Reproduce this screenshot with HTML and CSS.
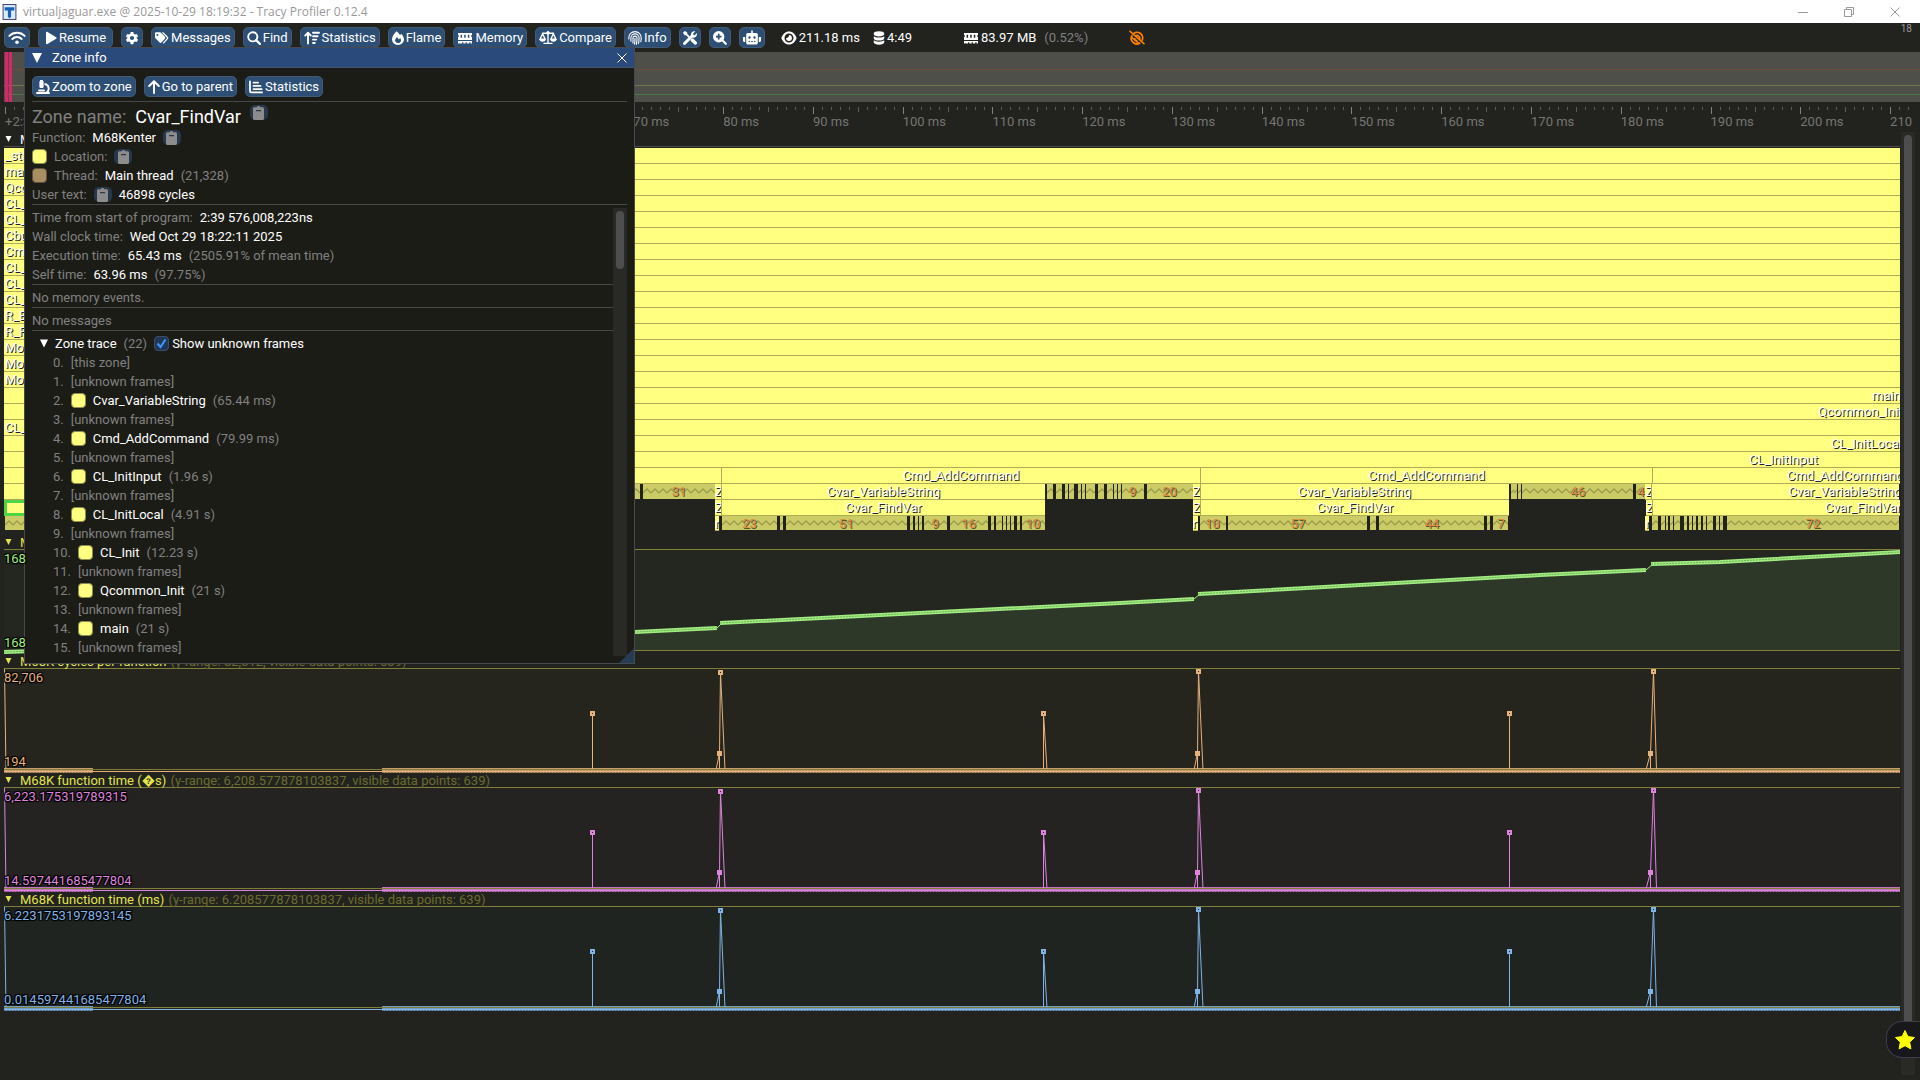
FILE: index.html
```html
<!DOCTYPE html>
<html lang="en">
<head>
<meta charset="utf-8">
<title>virtualjaguar.exe @ 2025-10-29 18:19:32 - Tracy Profiler 0.12.4</title>
<link rel="stylesheet" href="styles.css">
</head>
<body>
<svg class="defs" aria-hidden="true">
  <symbol id="i-wifi" viewBox="0 0 20 16"><path d="M1.5 6.2a12 12 0 0 1 17 0M4.8 9.6a7.6 7.6 0 0 1 10.4 0" fill="none" stroke="currentColor" stroke-width="2.2" stroke-linecap="round"/><circle cx="10" cy="13.3" r="2"/></symbol>
  <symbol id="i-play" viewBox="0 0 12 14"><path d="M1 1.8C1 1 1.8.6 2.500 1l8.600 5.200c.6.4.6 1.200 0 1.600L2.500 13C1.800 13.400 1 13 1 12.200z"/></symbol>
  <symbol id="i-gear" viewBox="0 0 16 16"><path fill-rule="evenodd" d="M6.500 1h3l.5 2.200 1.300.8 2.200-.7 1.500 2.600L13.400 7.300v1.400l1.600 1.400-1.500 2.600-2.200-.7-1.300.8L9.500 15h-3L6 12.800l-1.300-.8-2.200.7L1 10.100l1.600-1.400V7.300L1 5.900l1.500-2.600 2.200.7L6 3.200zM8 5.600a2.400 2.400 0 1 0 0 4.800 2.400 2.400 0 0 0 0-4.800z"/></symbol>
  <symbol id="i-tags" viewBox="0 0 16 14"><path fill-rule="evenodd" d="M0 1.500C0 .9.500.5 1 .5h4.600c.4 0 .8.200 1.100.5l4.600 4.700c.6.6.6 1.500 0 2.100l-3.900 4.400c-.6.6-1.500.6-2.100 0L.5 7.300C.2 7 0 6.600 0 6.200zM2.800 2.400a1.100 1.100 0 1 0 0 2.200 1.100 1.100 0 0 0 0-2.200z"/><path d="M9 .9l4.900 4.900c.7.700.7 1.500 0 2.200L9.900 12.600" fill="none" stroke="currentColor" stroke-width="1.500" stroke-linecap="round"/></symbol>
  <symbol id="i-search" viewBox="0 0 14 14"><circle cx="5.800" cy="5.800" r="4.600" fill="none" stroke="currentColor" stroke-width="1.900"/><path d="M9.200 9.200l3.700 3.700" stroke="currentColor" stroke-width="2.200" stroke-linecap="round"/></symbol>
  <symbol id="i-sort" viewBox="0 0 16 14"><path d="M4 12.500V2M1.200 4.600L4 1.700l2.800 2.900M9 1.800h6M9 5.200h4.600M9 8.600h3.200M9 12h1.800" fill="none" stroke="currentColor" stroke-width="1.900" stroke-linecap="round" stroke-linejoin="round"/></symbol>
  <symbol id="i-flame" viewBox="0 0 12 14"><path fill-rule="evenodd" d="M4.600.3c1.600 1.300 2.700 2.700 3.500 4 .3-.5.7-1 1.200-1.500C10.800 4.300 12 6.700 12 8.300 12 11.500 9.300 14 6 14s-6-2.500-6-5.700C0 5.600 2.200 2.500 4.600.3zM6.100 12c1.700 0 2.900-1.100 2.900-2.600 0-.9-.5-1.800-.9-2.300L6.900 8.500 5 6.100C4 7.300 3.100 8.400 3.100 9.500c0 1.500 1.300 2.500 3 2.500z"/></symbol>
  <symbol id="i-ram" viewBox="0 0 16 12"><path fill-rule="evenodd" d="M1 1h14v1.800a1.300 1.300 0 0 0 0 2.400V8H1V5.200a1.300 1.300 0 0 0 0-2.400zM3.600 2.700v3h1.500v-3zm3.600 0v3h1.500v-3zm3.600 0v3h1.500v-3z"/><path d="M1 9h14v2.500h-1.500v-1.200h-1.200v1.200H9.900v-1.200H8.700v1.200H6.300v-1.200H5.100v1.200H2.700v-1.200H2.500v1.200H1z"/></symbol>
  <symbol id="i-scale" viewBox="0 0 18 14"><path d="M9 1v11.800M5 12.900h8M3.500 2.800h11M3.600 3.200L1 8.800h5.200zM14.400 3.200l-2.600 5.600H17z" fill="none" stroke="currentColor" stroke-width="1.400" stroke-linejoin="round" stroke-linecap="round"/><path d="M.3 8.600h6.600c0 1.600-1.500 2.600-3.300 2.600S.3 10.200.3 8.600zM11.100 8.600h6.600c0 1.600-1.500 2.600-3.300 2.600s-3.300-1-3.300-2.600z"/><circle cx="9" cy="2.400" r="1.700"/></symbol>
  <symbol id="i-print" viewBox="0 0 14 14"><path d="M.8 8V6.800a6.200 6.200 0 0 1 12.400 0c0 1.700 0 2.700-.4 4M2.900 10.200V7a4.100 4.100 0 0 1 8.200 0c0 2.300-.1 3.800-.7 5.600M5 12V7.100a2 2 0 0 1 4 0c0 2.500-.1 4.300-.7 6.300M7 7.200c0 2.500 0 4.200-.5 6" fill="none" stroke="currentColor" stroke-width="1.100" stroke-linecap="round"/></symbol>
  <symbol id="i-tools" viewBox="0 0 14 14"><path d="M1.500 12.500L9 5" stroke="currentColor" stroke-width="3" stroke-linecap="round"/><path d="M8 2.800C8.600.8 10.500 0 12.300.5L10.200 2.600l.3 1.400 1.300.3L13.700 2c.8 2-.5 4.500-2.800 4.700-1 .1-2-.3-2.700-1z"/><path d="M1.200 1.200l5 5" stroke="currentColor" stroke-width="1.800"/><path d="M0 1.800L1.800 0l2.400 1.600v1.300L3 4.200H1.500zM7.600 8.600l1.100-1.200 1.500.1 3.500 3.600c.8.800 0 2.600-1.500 2.600-.4 0-.7-.2-.9-.4L7.700 9.900z"/></symbol>
  <symbol id="i-zoom" viewBox="0 0 14 14"><path fill-rule="evenodd" d="M5.700 0a5.700 5.700 0 1 1 0 11.400A5.700 5.700 0 0 1 5.700 0zm-.9 2.800v2H2.900v1.700h1.900v2h1.800v-2h1.900V4.800H6.600v-2z"/><path d="M9.300 9.300l3.500 3.500" stroke="currentColor" stroke-width="2.200" stroke-linecap="round"/></symbol>
  <symbol id="i-robot" viewBox="0 0 18 14"><path fill-rule="evenodd" d="M8.200 0h1.600v2.600H13c1 0 1.800.8 1.800 1.800v7.800c0 1-.8 1.800-1.800 1.800H5c-1 0-1.800-.8-1.800-1.800V4.400c0-1 .8-1.800 1.800-1.800h3.200zM6.500 5.800a1.200 1.200 0 1 0 0 2.400 1.200 1.200 0 0 0 0-2.400zm5 0a1.200 1.200 0 1 0 0 2.400 1.200 1.200 0 0 0 0-2.400zM5.500 10.500v1h1.600v-1zm2.700 0v1h1.600v-1zm2.700 0v1h1.600v-1z"/><path d="M0 6.500h2.200v5H1.200C.5 11.500 0 11 0 10.300zM15.800 6.500H18v3.800c0 .7-.5 1.200-1.200 1.200h-1z"/></symbol>
  <symbol id="i-eye" viewBox="0 0 16 14"><path fill-rule="evenodd" d="M8 .5c3.500 0 6.400 2.700 7.700 6.500-1.300 3.800-4.200 6.500-7.700 6.500S1.600 10.800.3 7C1.600 3.200 4.500.5 8 .5zm0 2a4.500 4.500 0 1 0 0 9 4.500 4.500 0 0 0 0-9z"/><path d="M8 4.100a2.900 2.900 0 1 1-2.900 2.900c1.700.2 2.900-1 2.900-2.900z"/></symbol>
  <symbol id="i-db" viewBox="0 0 13 16"><path d="M.5 2.800C.5 1.400 3.200.4 6.500.4s6 1 6 2.400v1c0 1.400-2.700 2.400-6 2.400s-6-1-6-2.400zM.5 6c1.200 1 3.400 1.500 6 1.500s4.800-.5 6-1.500v2.500c0 1.400-2.700 2.400-6 2.400s-6-1-6-2.400zM.5 10.600c1.200 1 3.400 1.600 6 1.600s4.800-.6 6-1.600v2.600c0 1.400-2.700 2.400-6 2.400s-6-1-6-2.400z"/></symbol>
  <symbol id="i-sat" viewBox="0 0 18 16"><path d="M4 5.500a6 6 0 0 0 8.500 8.200M4.500 4.500a6 6 0 0 1 9.800 6.800M6.800 6.300a3.200 3.200 0 0 1 4.700 4M6.300 8.500a3.200 3.200 0 0 0 3.200 3" fill="none" stroke="currentColor" stroke-width="1.900"/><path d="M1 1l16 14M3.500 8l7 6" stroke="currentColor" stroke-width="1.600"/></symbol>
  <symbol id="i-micro" viewBox="0 0 14 14"><path d="M1 13h12M3 10.500h5" stroke="currentColor" stroke-width="2" stroke-linecap="round"/><path d="M4 0h3v1l.6.6v5.600L6.800 8H4.200l-.8-.8V1.600L4 1z"/><path d="M8.500 4a4.600 4.600 0 0 1 1.800 8.600" fill="none" stroke="currentColor" stroke-width="1.900"/></symbol>
  <symbol id="i-up" viewBox="0 0 12 14"><path d="M6 13V1.500M1.200 6L6 1.300 10.800 6" fill="none" stroke="currentColor" stroke-width="2" stroke-linecap="round" stroke-linejoin="round"/></symbol>
  <symbol id="i-chart" viewBox="0 0 14 13"><path d="M1 1v9.500c0 .9.500 1.400 1.400 1.400H13M4.500 2.200H9M4.500 5.400h7M4.500 8.600h8.200" fill="none" stroke="currentColor" stroke-width="1.800" stroke-linecap="round"/></symbol>
  <symbol id="i-clip" viewBox="0 0 11 14"><path fill-rule="evenodd" d="M3.800 1.200a1.800 1.800 0 0 1 3.400 0H9.500c.8 0 1.500.7 1.500 1.500V12.500c0 .8-.7 1.500-1.500 1.500h-8C.7 14 0 13.300 0 12.500V2.700c0-.8.7-1.500 1.500-1.500zM3 4v1.200h5V4z"/></symbol>
  <symbol id="i-star" viewBox="0 0 20 20"><path d="M10 .5l2.900 6.100 6.600.9-4.800 4.700 1.200 6.700L10 15.700l-5.900 3.200 1.200-6.700L.5 7.500l6.600-.9z" stroke="currentColor" stroke-linejoin="round"/></symbol>
  <symbol id="i-down" viewBox="0 0 10 10"><path d="M0 0h10L5 10z"/></symbol>
  <symbol id="i-close" viewBox="0 0 10 10"><path d="M.5.5l9 9M9.500.5l-9 9" fill="none" stroke="currentColor"/></symbol>
</svg>

<header class="titlebar">
  <svg class="app-icon" viewBox="0 0 13 15"><rect x=".5" y=".5" width="12" height="14" fill="#d9ecfb" stroke="#4a4a78"/><path d="M2 3h9v3H8v6l-1.500 1.500L5 12V6H2z" fill="#1560b8"/></svg>
  <span class="app-title">virtualjaguar.exe @ 2025-10-29 18:19:32 - Tracy Profiler 0.12.4</span>
  <button class="win-btn" aria-label="Minimize"><svg viewBox="0 0 10 10"><path d="M0 5.500h10" stroke="currentColor"/></svg></button>
  <button class="win-btn" aria-label="Restore"><svg viewBox="0 0 10 10"><path d="M.5 2.500h7v7h-7zM2.500 2.500v-2h7v7h-2" fill="none" stroke="currentColor"/></svg></button>
  <button class="win-btn" aria-label="Close"><svg viewBox="0 0 10 10"><use href="#i-close"/></svg></button>
</header>

<nav class="toolbar">
  <button class="btn btn-icon" aria-label="Connection"><svg class="w18"><use href="#i-wifi"/></svg></button>
  <button class="btn btn-wide"><svg class="w12"><use href="#i-play"/></svg>Resume</button>
  <button class="btn btn-icon" aria-label="Options"><svg class="w14"><use href="#i-gear"/></svg></button>
  <button class="btn"><svg class="w14"><use href="#i-tags"/></svg>Messages</button>
  <button class="btn"><svg class="w14"><use href="#i-search"/></svg>Find</button>
  <button class="btn"><svg class="w16"><use href="#i-sort"/></svg>Statistics</button>
  <button class="btn"><svg class="w12"><use href="#i-flame"/></svg>Flame</button>
  <button class="btn"><svg class="w16"><use href="#i-ram"/></svg>Memory</button>
  <button class="btn"><svg class="w18"><use href="#i-scale"/></svg>Compare</button>
  <button class="btn"><svg class="w14"><use href="#i-print"/></svg>Info</button>
  <button class="btn btn-icon" aria-label="Tools"><svg class="w14"><use href="#i-tools"/></svg></button>
  <button class="btn btn-icon" aria-label="Zoom"><svg class="w14"><use href="#i-zoom"/></svg></button>
  <button class="btn btn-icon" aria-label="Assistant"><svg class="w18"><use href="#i-robot"/></svg></button>
  <span class="stat stat-view"><svg class="w16"><use href="#i-eye"/></svg>211.18 ms</span>
  <span class="stat stat-span"><svg class="w12"><use href="#i-db"/></svg>4:49</span>
  <span class="stat stat-mem"><svg class="w16"><use href="#i-ram"/></svg>83.97 MB <span class="dim">(0.52%)</span></span>
  <svg class="offline w18"><use href="#i-sat"/></svg>
  <span class="fps">18</span>
</nav>

<div class="frames"><i></i><i></i></div>
<div class="ruler" id="ruler"></div>

<main class="pane">
  <div class="tracks">
    <div class="thread-head"><svg><use href="#i-down"/></svg>Main thread</div>
    <div id="zones"></div>
    <section class="plot green" data-kind="ramp">
      <h2><svg><use href="#i-down"/></svg>M68K cycles</h2>
      <div class="graph"><span>168</span><span>168</span></div>
    </section>
    <section class="plot orange" data-kind="spikes">
      <h2><svg><use href="#i-down"/></svg>M68K cycles per function <small>(y-range: 82,512, visible data points: 639)</small></h2>
      <div class="graph"><span>82,706</span><span>194</span></div>
    </section>
    <section class="plot pink" data-kind="spikes">
      <h2><svg><use href="#i-down"/></svg>M68K function time (&#xFFFD;s) <small>(y-range: 6,208.577878103837, visible data points: 639)</small></h2>
      <div class="graph"><span>6,223.175319789315</span><span>14.597441685477804</span></div>
    </section>
    <section class="plot blue" data-kind="spikes">
      <h2><svg><use href="#i-down"/></svg>M68K function time (ms) <small>(y-range: 6.208577878103837, visible data points: 639)</small></h2>
      <div class="graph"><span>6.2231753197893145</span><span>0.014597441685477804</span></div>
    </section>
  </div>
  <div class="scroll main-scroll"><i></i></div>
</main>

<button class="badge" aria-label="Achievements"><svg><use href="#i-star"/></svg></button>

<section class="window">
  <header><svg><use href="#i-down"/></svg><h1>Zone info</h1><button class="close" aria-label="Close"><svg><use href="#i-close"/></svg></button></header>
  <div class="window-body">
    <div class="actions">
      <button class="btn"><svg class="w14"><use href="#i-micro"/></svg>Zoom to zone</button>
      <button class="btn"><svg class="w12"><use href="#i-up"/></svg>Go to parent</button>
      <button class="btn"><svg class="w14"><use href="#i-chart"/></svg>Statistics</button>
    </div>
    <hr>
    <p class="line zone-name"><span class="dim">Zone name:</span> <b>Cvar_FindVar</b> <button class="copy" aria-label="Copy name"><svg><use href="#i-clip"/></svg></button></p>
    <p class="line"><span class="dim">Function:</span> <b>M68Kenter</b> <button class="copy" aria-label="Copy function"><svg><use href="#i-clip"/></svg></button></p>
    <p class="line"><i class="swatch"></i> <span class="dim">Location:</span> <button class="copy" aria-label="Copy location"><svg><use href="#i-clip"/></svg></button></p>
    <p class="line"><i class="swatch tan"></i> <span class="dim">Thread:</span> <b>Main thread</b> <span class="dim">(21,328)</span></p>
    <p class="line"><span class="dim">User text:</span> <button class="copy" aria-label="Copy text"><svg><use href="#i-clip"/></svg></button> <b>46898 cycles</b></p>
    <hr>
    <div class="details">
      <div class="details-content">
        <p class="line"><span class="dim">Time from start of program:</span> <b>2:39 576,008,223ns</b></p>
        <p class="line"><span class="dim">Wall clock time:</span> <b>Wed Oct 29 18:22:11 2025</b></p>
        <p class="line"><span class="dim">Execution time:</span> <b>65.43 ms</b> <span class="dim">(2505.91% of mean time)</span></p>
        <p class="line"><span class="dim">Self time:</span> <b>63.96 ms</b> <span class="dim">(97.75%)</span></p>
        <hr>
        <p class="line dim">No memory events.</p>
        <hr>
        <p class="line dim">No messages</p>
        <hr>
        <div class="line trace-head"><svg><use href="#i-down"/></svg><b>Zone trace</b> <span class="dim">(22)</span> <label><input type="checkbox" checked>Show unknown frames</label></div>
        <ul class="trace" id="trace"></ul>
      </div>
      <div class="scroll"><i></i></div>
    </div>
  </div>
  <svg class="grip" viewBox="0 0 15 15"><path d="M15 0v15H0z"/></svg>
</section>
<script src="app.js"></script>
</body>
</html>
```
FILE: styles.css
```css
* { box-sizing: border-box; }
body {
  margin: 0;
  min-height: 100vh;
  display: flex;
  flex-direction: column;
  position: relative;
  background: #22231e;
  color: #fff;
  font: 13px/15px Roboto, "Liberation Sans", sans-serif;
  overflow: hidden;
}
h1, h2, p, ul { margin: 0; padding: 0; font-size: 13px; font-weight: 400; }
b { font-weight: 400; color: #fff; }
i { display: block; }
button { font: inherit; color: inherit; border: 0; background: none; padding: 0; margin: 0; }
svg { fill: currentColor; display: block; flex: none; }
.defs { display: none; }
.dim { color: #808080; }
.w12 { width: 12px; height: 14px; }
.w14 { width: 14px; height: 14px; }
.w16 { width: 16px; height: 14px; }
.w18 { width: 18px; height: 15px; }

/* title bar */
.titlebar {
  display: flex;
  align-items: center;
  height: 23px;
  background: #fff;
  color: #999;
  padding: 0 2px;
  font: 12px/16px "Open Sans", "Noto Sans", sans-serif;
}
.app-icon { width: 15px; height: 16px; }
.app-title { flex: 1; margin-left: 6px; }
.win-btn { width: 46px; height: 20px; display: flex; justify-content: center; align-items: center; }
.win-btn svg { width: 10px; height: 10px; }

/* toolbar */
.toolbar { display: flex; align-items: center; gap: 8px; height: 29px; padding: 0 4px; }
.btn {
  display: flex;
  align-items: center;
  gap: 2px;
  height: 21px;
  padding: 0 3px;
  background: #2d4f76;
  border: 1px solid #435a72;
  border-radius: 5px;
  white-space: nowrap;
}
.btn-wide { padding: 0 6px; }
.stat { display: flex; align-items: center; gap: 2px; white-space: nowrap; }
.stat .dim { margin-left: 6px; }
.stat-view { margin-left: 8px; }
.stat-span { margin-left: 5px; }
.stat-mem { margin-left: 43px; }
.offline { margin-left: 32px; color: #ff8000; }
.fps { margin-left: auto; align-self: flex-start; padding-right: 4px; font-size: 10px; line-height: 11px; color: #999; }

/* frame overview */
.frames {
  display: flex;
  gap: 1px;
  height: 50px;
  margin-left: 4px;
  padding-left: 1px;
  background:
    linear-gradient(#70483f, #70483f) 0 17px / 100% 1px no-repeat,
    linear-gradient(#76764c, #76764c) 0 33px / 100% 1px no-repeat,
    linear-gradient(#487848, #487848) 0 42px / 100% 1px no-repeat,
    #4d4f48;
}
.frames i { width: 3px; height: 100%; background: #dc2468; }

/* time ruler */
.ruler { display: flex; height: 30px; margin: 0 5px 0 5px; padding-top: 5px; overflow: hidden; color: #757571; }
.ruler-cell { flex: none; width: 4.7%; white-space: nowrap; }
.ticks { display: flex; height: 7px; }
.ticks i { flex: 1; height: 3px; border-left: 1px solid #5a5a56; }
.ticks i:nth-child(6) { height: 5px; }
.ticks i:first-child { height: 7px; border-color: #80807c; }

/* timeline */
.pane { flex: 1; display: flex; gap: 1px; padding: 0 5px 5px 4px; }
.tracks { flex: 1; min-width: 0; overflow: hidden; }
.thread-head { display: flex; align-items: center; height: 15px; border-bottom: 1px solid #4a4a4c; margin-bottom: 1px; }
.thread-head svg, .plot h2 svg { width: 9px; height: 6px; margin-right: 7px; }
.scroll { flex: none; width: 14px; padding: 3px; background: #292925; }
.scroll i { width: 8px; border-radius: 4px; background: #4e4e4f; }
.main-scroll i { height: 96%; }

.zone-row { display: flex; height: 16px; }
.zone-row:last-child { height: 15px; }
.zone-row > span { min-width: 0; overflow: hidden; white-space: nowrap; text-align: center; line-height: 16px; border-bottom: 1px solid transparent; }
.zone-row > .y { background: #ffff80; border-bottom-color: #adad58; color: #fff; text-shadow: 1px 1px 0 #222; }
.zone-row > .b { border-left: 1px solid #adad58; }
.zone-row > .l { text-align: left; padding-left: 1px; }
.zone-row > .z { text-align: left; }
.zone-row > .g {
  background: #cccc66 url("data:image/svg+xml,%3Csvg xmlns='http://www.w3.org/2000/svg' width='8' height='15'%3E%3Cpath d='M0 9l4-4 4 4' fill='none' stroke='%239c9c4e' stroke-width='1.3'/%3E%3C/svg%3E") repeat-x padding-box;
  color: #dd8844;
  text-shadow: 1px 1px 0 #555530;
}
.zone-row > .s { background: #ffff80 padding-box; border: 3px solid #4fd445; }

/* plots */
.plot h2 { display: flex; align-items: flex-end; height: 19px; line-height: 13px; border-bottom: 1px solid #7f7f38; color: #e3e34c; white-space: pre; }
.plot h2 svg { margin-bottom: 4px; }
.plot small { font-size: 13px; color: #6b6b2e; margin-left: 1px; }
.graph { display: grid; grid-template-rows: 100px; height: 100px; }
.graph > * { grid-area: 1 / 1; }
.graph svg { width: 100%; height: 106px; overflow: visible; }
.graph span { z-index: 1; justify-self: start; align-self: start; margin: 1px 0; text-shadow: 0 0 1px #000, 1px 1px 1px #000, -1px -1px 1px #000, 1px -1px 1px #000, -1px 1px 1px #000; }
.graph span + span { align-self: end; margin: 0; }
.green .graph { background: #24271f; color: #a0ee80; }
.orange .graph { background: #26251d; color: #e6b27d; }
.pink .graph { background: #252321; color: #dd84dd; }
.blue .graph { background: #202421; color: #80b3e6; }
.curve { fill: none; stroke: currentColor; }
.band { fill: none; stroke: currentColor; stroke-width: 5; opacity: .85; }
.thick { fill: none; stroke: currentColor; stroke-width: 4; }
.points { fill: none; stroke: #000; stroke-opacity: .28; stroke-width: 1; stroke-dasharray: 2 1; }
.area { fill: #2e3828; }
.base { stroke: #7f7f38; }
.node { fill: #22231e; stroke: currentColor; stroke-width: 2; }
.full { fill: currentColor; }

/* achievements badge */
.badge {
  position: absolute;
  right: 0;
  bottom: 22px;
  width: 34px;
  height: 37px;
  padding-left: 8px;
  background: #18181a;
  border: 1px solid #3d3d48;
  border-right: 0;
  border-radius: 16px 0 0 16px;
  color: #ff0;
}
.badge svg { width: 20px; height: 20px; }

/* zone info window */
.window {
  position: absolute;
  left: 24px;
  top: 47px;
  width: 611px;
  height: 617px;
  display: flex;
  flex-direction: column;
  background: #1c1c16;
  border: 1px solid #464a50;
}
.window header { display: flex; align-items: center; height: 20px; padding: 0 7px; background: #294a7a; border-bottom: 1px solid #46526a; }
.window header svg { width: 10px; height: 10px; }
.window h1 { flex: 1; margin-left: 10px; }
.window-body { flex: 1; min-height: 0; display: flex; flex-direction: column; padding: 8px 7px 7px; }
.actions { display: flex; gap: 8px; margin-bottom: 4px; }
hr { width: 100%; flex: none; height: 1px; margin: 0 0 3px; border: 0; background: #47474a; }
.line { display: flex; align-items: center; gap: 7px; height: 19px; white-space: nowrap; }
.zone-name { gap: 9px; height: 23px; font-size: 18px; line-height: 22px; }
.zone-name .copy { align-self: flex-start; }
.copy { display: flex; justify-content: center; align-items: center; width: 18px; height: 15px; border-radius: 5px; background: #27384c; color: #8c8c8c; }
.copy svg { width: 11px; height: 14px; }
.swatch { flex: none; width: 15px; height: 15px; border-radius: 4px; background: #ffff80; border: 1px solid #8c8c50; }
.tan { background: #a98e62; border-color: #5e5340; }
.details { flex: 1; min-height: 0; display: flex; }
.details-content { flex: 1; min-width: 0; overflow: hidden; }
.details .scroll i { height: 58px; }
.trace-head { padding-left: 8px; }
.trace-head > svg { width: 8px; height: 9px; }
.trace-head label { display: flex; align-items: center; gap: 3px; }
input[type="checkbox"] {
  appearance: none;
  width: 15px;
  height: 15px;
  margin: 0;
  border: 1px solid #3d4f66;
  border-radius: 4px;
  background: #1f3858 url("data:image/svg+xml,%3Csvg xmlns='http://www.w3.org/2000/svg' viewBox='0 0 13 13'%3E%3Cpath d='M2.500 6.500l3 3.500 5-7.500' fill='none' stroke='%234296fa' stroke-width='2'/%3E%3C/svg%3E");
}
.trace { list-style: none; padding-left: 21px; }
.grip { position: absolute; right: 0; bottom: 0; width: 15px; height: 15px; color: #263b54; }
```
FILE: app.js
```js
const START = 4, END = 1900;

// Ruler: one cell per 10 ms, ten ticks each.
const ruler = document.getElementById('ruler');
for (let i = 0; i < 22; i++) {
  const cell = document.createElement('div');
  cell.className = 'ruler-cell';
  cell.innerHTML = '<div class="ticks">' + '<i></i>'.repeat(10) + '</div>' + (i ? i * 10 + ' ms' : '+2:39');
  ruler.append(cell);
}

// Zones: [kind, end, label]; kinds: y zone, g folded zones, s selected, n empty, b left edge, l and z label at the left.
const left = ['_start', 'main', 'Qcommon_Init', 'CL_Init', 'CL_Init', 'Cbuf', 'Cmd', 'CL_', 'CL_', 'CL_', 'R_B', 'R_F', 'Mod', 'Mod', 'Mod', '', '', 'CL_'];
const right = { 15: [1871, 'main'], 16: [1817, 'Qcommon_Init'], 18: [1830, 'CL_InitLocal'], 19: [1748, 'CL_InitInput'] };
const rows = [];
for (let r = 0; r < 20; r++) {
  const row = [['y l', 600, left[r] || '']];
  if (right[r]) row.push(['y', right[r][0], ''], ['y l', END, right[r][1]]);
  else row.push(['y', END, '']);
  rows.push(row);
}

// Alternates folded zones and gaps through a list of edges.
const folds = (edges, labels = {}) => edges.map((e, i) => [i % 2 ? 'n' : 'g', e, labels[e] || '']);

rows.push([['y', 721, ''], ['y b', 1200, 'Cmd_AddCommand'], ['y b', 1652, 'Cmd_AddCommand'], ['y b', 1787, ''], ['y z', END, 'Cmd_AddCommand']]);
rows.push([['y', 600, ''],
  ...folds([640, 643, 715], { 715: '31' }), ['y z', 721, 'Z'], ['y b', 1045, 'Cvar_VariableString'], ['n', 1047, ''],
  ...folds([1053, 1056, 1062, 1065, 1068, 1069, 1074, 1078, 1081, 1082, 1085, 1086, 1095, 1098, 1104, 1107, 1113, 1114, 1117, 1118, 1121, 1122, 1144, 1147, 1193], { 1144: '9', 1193: '20' }),
  ['y z', 1200, 'Z'], ['y b', 1509, 'Cvar_VariableString'], ['n', 1511, ''],
  ...folds([1514, 1515, 1518, 1519, 1522, 1523, 1634, 1637, 1646], { 1634: '46', 1646: '4' }),
  ['y z', 1652, 'Z'], ['y b', 1789, ''], ['y z', END, 'Cvar_VariableString']]);
rows.push([['s', 400, ''], ['n', 715, ''], ['y z', 721, 'Z'], ['y b', 1045, 'Cvar_FindVar'], ['n', 1193, ''],
  ['y z', 1200, 'Z'], ['y b', 1509, 'Cvar_FindVar'], ['n', 1646, ''], ['y z', 1652, 'Z'], ['y b', 1825, ''], ['y z', END, 'Cvar_FindVar']]);
rows.push([['n', 5, ''], ['g', 400, ''], ['n', 715, ''], ['y z', 719, 'r'], ['n', 722, ''],
  ...folds([777, 780, 783, 786, 907, 910, 913, 915, 918, 919, 922, 924, 947, 950, 988, 991, 994, 996, 1002, 1003, 1006, 1007, 1010, 1011, 1014, 1017, 1020, 1022, 1045], { 777: '23', 907: '51', 947: '9', 988: '16', 1045: '10' }),
  ['n', 1193, ''], ['y z', 1198, 'r'], ['n', 1200, ''],
  ...folds([1226, 1229, 1368, 1371, 1377, 1380, 1485, 1488, 1491, 1494, 1509], { 1226: '10', 1368: '57', 1485: '44', 1509: '7' }),
  ['n', 1646, ''], ['y z', 1650, 'r'], ['n', 1653, ''],
  ...folds([1659, 1662, 1666, 1667, 1669, 1671, 1674, 1675, 1681, 1685, 1688, 1690, 1693, 1694, 1697, 1699, 1702, 1704, 1707, 1708, 1714, 1717, 1720, 1721, 1724, 1728, 1900], { 1900: '72' })]);

const zones = document.getElementById('zones');
for (const row of rows) {
  const el = document.createElement('div');
  el.className = 'zone-row';
  let x = START;
  for (const [kind, end, label] of row) {
    const seg = document.createElement('span');
    seg.className = kind;
    seg.style.width = (end - x) / (END - START) * 100 + '%';
    seg.textContent = label;
    el.append(seg);
    x = end;
  }
  zones.append(el);
}

// Plots, drawn on a 1896 x 106 field that stretches with the window.
const node = (x, y) => `<rect class="node${y === 84 ? ' full' : ''}" x="${x - 1}" y="${y - 1}" width="3" height="3"/>`;
const ramp = '0,102 631,82 713,78 718,73 1116,53 1190,49 1196,44 1536,25 1642,20 1649,14 1716,12 1896,2';
const runs = 'M0 102L631 82 713 78M716 73L1116 53 1190 49M1194 44L1536 25 1642 20M1647 14L1716 12 1896 2';
const ramps = `<polygon class="area" points="${ramp} 1896,100 0,100"/><path class="base" d="M0 100.500H1896"/>
  <polyline class="curve" points="${ramp}"/><path class="thick" d="${runs}"/><path class="points" d="${runs}"/>`;
const spikes = `<path class="curve" d="M.5 0L2 102M588.500 44V101M712 101L715.500 84V101M715.500 84L716.500 3L721 101M1039.500 44V101M1039.500 44L1043 101M1190 101L1193.500 84V101M1193.500 84L1194.500 2L1199 101M1505.500 44V101M1642 101L1646.500 84V101M1646.500 84L1649.500 2L1652.500 101M0 102.500H1896"/>
  <path class="band" d="M0 101.500H89M378 101.500H1896"/><path class="points" d="M0 103.500H89M378 103.500H1896"/><path class="base" d="M0 100.500H1896"/>`
  + [[588, 44], [715, 84], [716, 3], [1039, 44], [1193, 84], [1194, 2], [1505, 44], [1646, 84], [1649, 2]].map(p => node(...p)).join('');
document.querySelectorAll('.plot').forEach(p => {
  p.querySelector('.graph').insertAdjacentHTML('afterbegin',
    `<svg viewBox="0 0 1896 106" preserveAspectRatio="none">${p.dataset.kind === 'ramp' ? ramps : spikes}</svg>`);
});

// Zone trace
const trace = { 0: '[this zone]', 2: ['Cvar_VariableString', '65.44 ms'], 4: ['Cmd_AddCommand', '79.99 ms'], 6: ['CL_InitInput', '1.96 s'], 8: ['CL_InitLocal', '4.91 s'], 10: ['CL_Init', '12.23 s'], 12: ['Qcommon_Init', '21 s'], 14: ['main', '21 s'] };
const list = document.getElementById('trace');
for (let i = 0; i < 16; i++) {
  const t = trace[i] || '[unknown frames]';
  list.insertAdjacentHTML('beforeend', `<li class="line"><span class="dim">${i}.</span>` +
    (Array.isArray(t) ? `<i class="swatch"></i><b>${t[0]}</b><span class="dim">(${t[1]})</span>` : `<span class="dim">${t}</span>`) + '</li>');
}
```
